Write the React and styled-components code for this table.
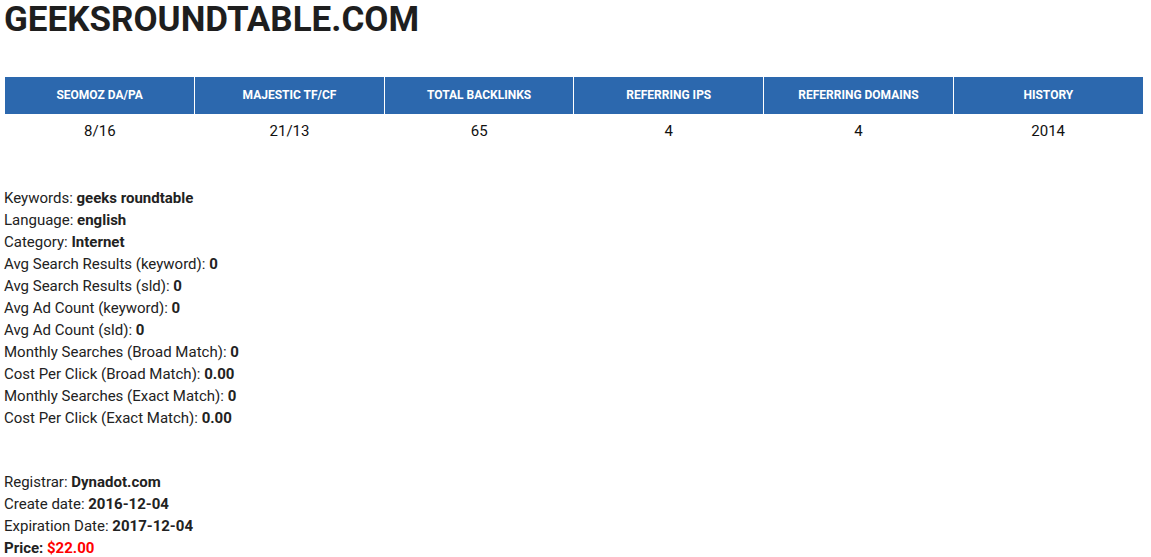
import styled, { createGlobalStyle } from "styled-components";

const GlobalStyle = createGlobalStyle`
  body {
    margin: 0;
    font-family: Roboto, "Liberation Sans", sans-serif;
    color: #222;
    background: #fff;
  }
`;

const metrics = [
  { label: "SEOMOZ DA/PA", value: "8/16" },
  { label: "MAJESTIC TF/CF", value: "21/13" },
  { label: "TOTAL BACKLINKS", value: "65" },
  { label: "REFERRING IPS", value: "4" },
  { label: "REFERRING DOMAINS", value: "4" },
  { label: "HISTORY", value: "2014" },
];

const keywordInfo = [
  ["Keywords", "geeks roundtable"],
  ["Language", "english"],
  ["Category", "Internet"],
  ["Avg Search Results (keyword)", "0"],
  ["Avg Search Results (sld)", "0"],
  ["Avg Ad Count (keyword)", "0"],
  ["Avg Ad Count (sld)", "0"],
  ["Monthly Searches (Broad Match)", "0"],
  ["Cost Per Click (Broad Match)", "0.00"],
  ["Monthly Searches (Exact Match)", "0"],
  ["Cost Per Click (Exact Match)", "0.00"],
];

const registrarInfo = [
  ["Registrar", "Dynadot.com"],
  ["Create date", "2016-12-04"],
  ["Expiration Date", "2017-12-04"],
];

const App = () => {
  return (
    <Page>
      <GlobalStyle />
      <Title>GEEKSROUNDTABLE.COM</Title>
      <Stats>
        <thead>
          <tr>
            {metrics.map((m) => (
              <HeadCell key={m.label}>{m.label}</HeadCell>
            ))}
          </tr>
        </thead>
        <tbody>
          <tr>
            {metrics.map((m) => (
              <ValueCell key={m.label}>{m.value}</ValueCell>
            ))}
          </tr>
        </tbody>
      </Stats>
      <InfoBlock>
        {keywordInfo.map(([k, v]) => (
          <Line key={k}>
            {k}: <b>{v}</b>
          </Line>
        ))}
      </InfoBlock>
      <InfoBlock $gap>
        {registrarInfo.map(([k, v]) => (
          <Line key={k}>
            {k}: <b>{v}</b>
          </Line>
        ))}
        <Line>
          <b>Price: </b>
          <Price>$22.00</Price>
        </Line>
      </InfoBlock>
    </Page>
  );
};

export default App;

const Page = styled.div`
  padding: 0 8px 0 4px;
`;

const Title = styled.h1`
  margin: 0;
  font-size: 35px;
  line-height: 40px;
  font-weight: 700;
  color: #1e1e1e;
`;

const Stats = styled.table`
  width: calc(100% - 1px);
  margin: 37px 0 0 1px;
  border-collapse: collapse;
  table-layout: fixed;
`;

const HeadCell = styled.th`
  background: #2c68ae;
  color: #fff;
  font-size: 12px;
  font-weight: 700;
  height: 35px;
  padding: 0 0 2px;
  text-align: center;
  border-left: 1px solid #fff;

  &:first-child {
    border-left: none;
  }
`;

const ValueCell = styled.td`
  font-size: 15px;
  color: #111;
  text-align: center;
  height: 33px;
  padding: 0;
`;

const InfoBlock = styled.div`
  margin-top: ${({ $gap }) => ($gap ? "42px" : "40px")};
  font-size: 15px;
  line-height: 22px;
`;

const Line = styled.div`
  b {
    font-weight: 700;
  }
`;

const Price = styled.b`
  color: #f00;
`;
